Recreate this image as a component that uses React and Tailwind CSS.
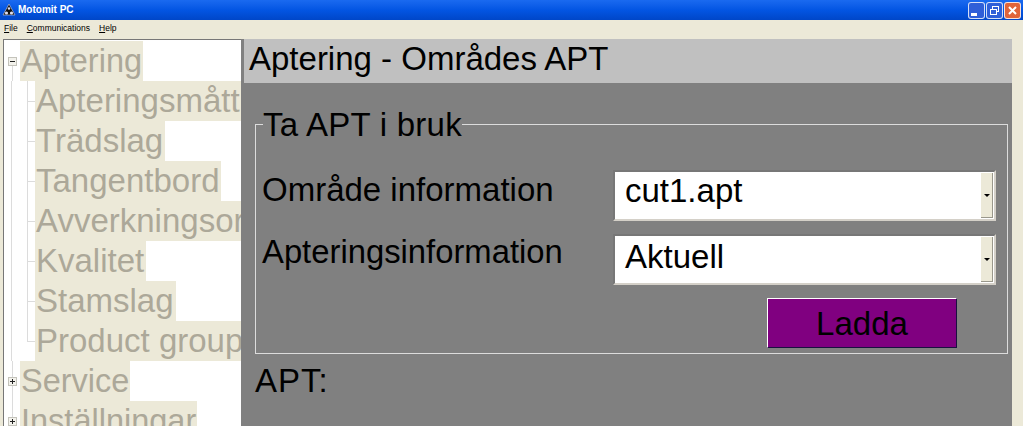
const font = { fontFamily: '"Liberation Sans", Arial, sans-serif' };

function Expander({ open }) {
  return (
    <span className="relative z-10 flex h-[9px] w-[9px] items-center justify-center border border-[#c4c3bb] bg-[#f3f2ec]">
      <span className="absolute h-px w-[5px] bg-[#222]" />
      {!open && <span className="absolute h-[5px] w-px bg-[#222]" />}
    </span>
  );
}

function Root({ label, open, first }) {
  return (
    <div className="flex h-10 items-center">
      <div className="relative flex h-full w-[16px] shrink-0 items-center justify-center">
        <span className={`absolute w-px bg-[#dcdcdc] ${first ? "top-1/2 bottom-0" : "top-0 bottom-0"}`} />
        <Expander open={open} />
      </div>
      <span className="flex h-10 items-center bg-[#ece9d8] pl-[1px] pr-[1px] text-[32.5px] leading-10 text-[#aca899] whitespace-nowrap">
        {label}
      </span>
    </div>
  );
}

function Child({ label, last }) {
  return (
    <div className="flex h-10 items-center">
      <div className="relative h-full w-[16px] shrink-0">
        <span className="absolute left-[7px] top-0 bottom-0 w-px bg-[#dcdcdc]" />
      </div>
      <div className="relative h-full w-[15px] shrink-0">
        <span className={`absolute left-[7px] top-0 w-px bg-[#dcdcdc] ${last ? "h-1/2" : "bottom-0"}`} />
        <span className="absolute left-[7px] right-0 top-1/2 h-px bg-[#dcdcdc]" />
      </div>
      <span className="flex h-10 min-w-0 items-center overflow-hidden bg-[#ece9d8] pl-[1px] pr-[2px] text-[33px] leading-10 text-[#aca899] whitespace-nowrap">
        {label}
      </span>
    </div>
  );
}

function Combo({ value, lift }) {
  return (
    <div className="flex h-[51px] w-[383px] items-center border-2 border-t-[#777] border-l-[#777] border-b-[#d4d0c8] border-r-[#d4d0c8] bg-white p-px">
      <span className={`flex-1 pl-[9px] text-[33px] leading-none text-black ${lift}`}>{value}</span>
      <span className="flex h-full w-[12px] items-center justify-center border-r border-b border-[#9a988c] bg-[#ece9d8]">
        <span className="h-0 w-0 border-x-[3px] border-t-[3px] border-x-transparent border-t-black" />
      </span>
    </div>
  );
}

function WinBtn({ className, children }) {
  return (
    <span className={`flex h-[17px] w-[17px] items-center justify-center rounded-[3px] border border-white/80 ${className}`}>
      {children}
    </span>
  );
}

export default function App() {
  return (
    <div style={font} className="flex h-[426px] w-[1023px] flex-col overflow-hidden bg-[#ece9d8]">
      <div className="flex h-5 shrink-0 items-center justify-between bg-gradient-to-b from-[#1a6af0] via-[#0355e3] to-[#0046c8] pl-[2px] pr-[2px]">
        <div className="flex items-center gap-[2px]">
          <svg width="14" height="14" viewBox="0 0 14 14">
            <path d="M7 1 L13 12 L1 12 Z" fill="#111" stroke="#ccd" strokeWidth="0.6" />
            <circle cx="4.5" cy="10" r="1.6" fill="#dde" />
            <circle cx="9.5" cy="10" r="1.6" fill="#dde" />
            <circle cx="7" cy="5.5" r="1.2" fill="#dde" />
          </svg>
          <span className="text-[10px] font-bold leading-none text-white">Motomit PC</span>
        </div>
        <div className="flex items-center gap-px">
          <WinBtn className="bg-[#2f5fd8]">
            <span className="mt-[8px] mr-[5px] h-[3px] w-[6px] bg-white" />
          </WinBtn>
          <WinBtn className="bg-[#2f5fd8]">
            <svg width="11" height="11" viewBox="0 0 11 11" fill="none" stroke="#fff" strokeWidth="1">
              <rect x="3.5" y="1.5" width="6" height="5" />
              <rect x="1.5" y="4.5" width="6" height="5" fill="#2f5fd8" />
            </svg>
          </WinBtn>
          <WinBtn className="bg-[#e0643a]">
            <svg width="11" height="11" viewBox="0 0 11 11" stroke="#fff" strokeWidth="2">
              <path d="M2 2 L9 9 M9 2 L2 9" />
            </svg>
          </WinBtn>
        </div>
      </div>

      <div className="flex h-[17px] shrink-0 items-center gap-[9px] pl-[4px] text-[8.5px] leading-none text-black">
        <span><u>F</u>ile</span>
        <span><u>C</u>ommunications</span>
        <span><u>H</u>elp</span>
      </div>

      <div className="mt-[2px] flex min-h-0 flex-1 pl-[3px] pr-[11px]">
        <div className="flex w-[238px] shrink-0 flex-col overflow-hidden border-t border-l border-[#777] bg-white pt-[1px]">
          <Root label="Aptering" open first />
          <Child label="Apteringsmått" />
          <Child label="Trädslag" />
          <Child label="Tangentbord" />
          <Child label="Avverkningsorder" />
          <Child label="Kvalitet" />
          <Child label="Stamslag" />
          <Child label="Product group" last />
          <Root label="Service" />
          <Root label="Inställningar" />
        </div>

        <div className="flex min-w-0 flex-1 flex-col bg-[#808080] pl-[3px]">
          <div className="flex h-[44px] shrink-0 items-center bg-[#c0c0c0] pb-[6px] pl-[5px] text-[33px] leading-none text-black">
            Aptering - Områdes APT
          </div>
          <fieldset className="mt-[24px] ml-[11px] mr-[4px] h-[247px] shrink-0 border border-[#dcdcdc] px-[6px]">
            <legend className="ml-[1px] px-0 text-[33px] leading-[34px] tracking-[0.25px] text-black"><span className="relative top-[1px]">Ta APT i bruk</span></legend>
            <div className="mt-[29px] flex items-center justify-between pr-[5px]">
              <span className="-mt-[13px] text-[33px] leading-none text-black">Område information</span>
              <Combo value="cut1.apt" lift="pb-[10px]" />
            </div>
            <div className="mt-[13px] flex items-center justify-between pr-[5px]">
              <span className="-mt-[14px] text-[32.8px] leading-none text-black">Apteringsinformation</span>
              <Combo value="Aktuell" lift="pb-[7px]" />
            </div>
            <div className="mt-[13px] flex justify-end pr-[44px]">
              <button className="flex h-[50px] w-[190px] items-center justify-center border border-t-white border-l-white border-b-[#1a1040] border-r-[#1a1040] bg-[#800080] text-[33px] leading-none text-black">
                Ladda
              </button>
            </div>
          </fieldset>
          <div className="mt-[9px] ml-[11px] text-[33px] leading-9 tracking-[1px] text-black">APT:</div>
        </div>
      </div>
    </div>
  );
}
